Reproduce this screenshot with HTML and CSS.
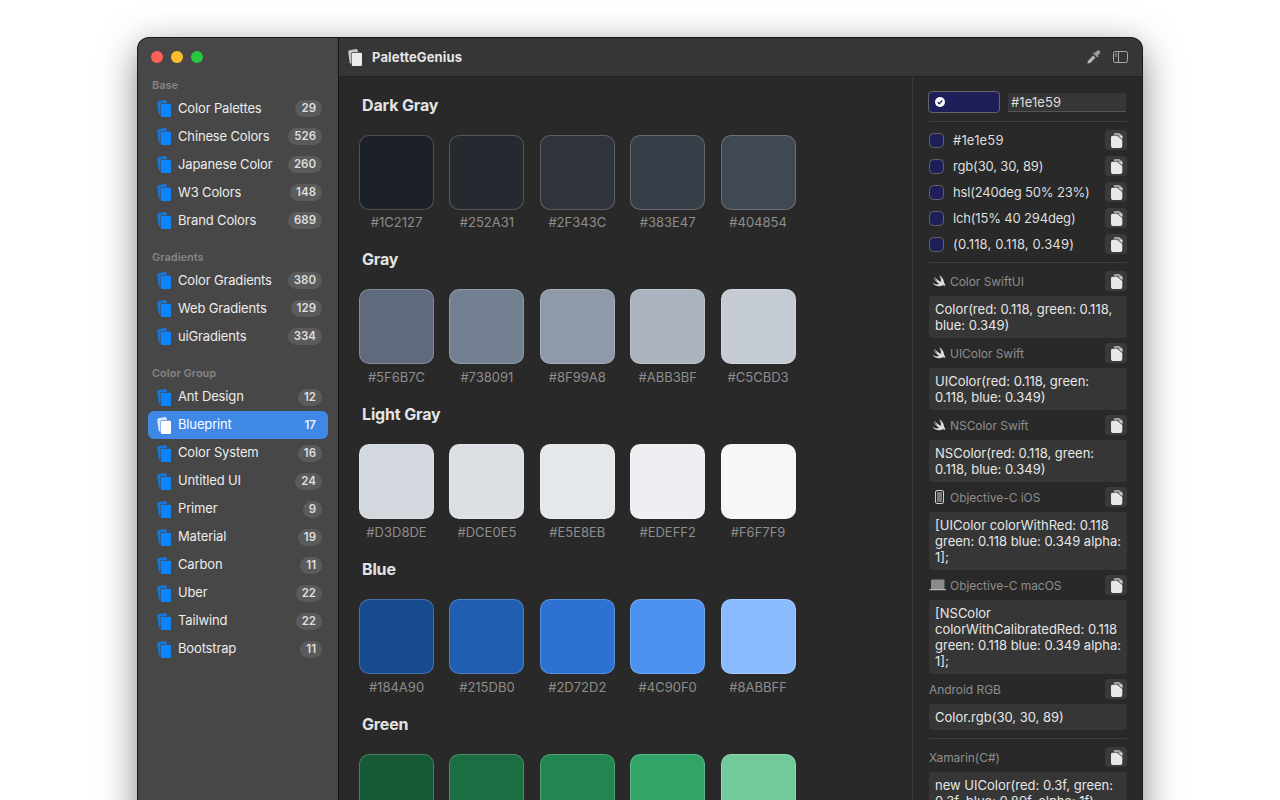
FILE: index.html
```html
<!DOCTYPE html>
<html lang="en">
<head>
<meta charset="utf-8">
<title>PaletteGenius</title>
<link rel="stylesheet" href="styles.css">
</head>
<body>
<svg class="defs" width="0" height="0">
  <symbol id="stack" viewBox="0 0 14 17">
    <path d="M.2 3.200Q0 1.600 1.500 1.300L7.900.1Q9.300 0 9.600 1.200L10 3H4.800Q3.300 3 3.300 4.500V14.600L1.800 14.200z" class="stack-back"/>
    <path d="M5 3.800h7.800a1.200 1.200 0 0 1 1.200 1.200v10.800a1.200 1.200 0 0 1-1.200 1.200H5a1.200 1.200 0 0 1-1.200-1.200V5A1.200 1.200 0 0 1 5 3.800z"/>
  </symbol>
  <symbol id="copy" viewBox="0 0 13 15">
    <path d="M4 0h5.300l3.200 2.600V6L8.200 2.300H4z" opacity=".6"/>
    <path d="M2.500 2.800H7L12.300 7v6a2 2 0 0 1-2 2H3a2 2 0 0 1-2-2V4.300a1.500 1.500 0 0 1 1.500-1.500z"/>
    <path d="M8.200 2.800l4.100 3.300V3.600l-1-.8z" opacity=".85"/>
  </symbol>
  <symbol id="swift" viewBox="0 0 16 14">
    <path d="M1 8.600C3.500 10.500 6 10.800 8 9.900 5.600 8 3.200 5.300 2 3.500 3.800 5.300 5.500 6.700 6.600 7.400 5.300 6 4 4.100 3.200 2.600 5 4.600 7.400 6.700 9.700 8.100 10.400 6 9.800 3.400 8 1c3 1.800 5.200 4.800 5 7.600 1 1.200 1.400 2.700 1.200 4-.6-1.100-1.800-1.600-2.700-1.100C9.200 12.800 4.500 13.200 1 8.600z"/>
  </symbol>
</svg>

<div class="window">
  <aside class="sidebar">
    <div class="lights"><i class="light red"></i><i class="light yellow"></i><i class="light green"></i></div>

    <div class="group-title first">Base</div>
    <div class="item"><svg class="item-icon"><use href="#stack"/></svg><span class="item-name">Color Palettes</span><span class="badge">29</span></div>
    <div class="item"><svg class="item-icon"><use href="#stack"/></svg><span class="item-name">Chinese Colors</span><span class="badge">526</span></div>
    <div class="item"><svg class="item-icon"><use href="#stack"/></svg><span class="item-name">Japanese Color</span><span class="badge">260</span></div>
    <div class="item"><svg class="item-icon"><use href="#stack"/></svg><span class="item-name">W3 Colors</span><span class="badge">148</span></div>
    <div class="item"><svg class="item-icon"><use href="#stack"/></svg><span class="item-name">Brand Colors</span><span class="badge">689</span></div>

    <div class="group-title">Gradients</div>
    <div class="item"><svg class="item-icon"><use href="#stack"/></svg><span class="item-name">Color Gradients</span><span class="badge">380</span></div>
    <div class="item"><svg class="item-icon"><use href="#stack"/></svg><span class="item-name">Web Gradients</span><span class="badge">129</span></div>
    <div class="item"><svg class="item-icon"><use href="#stack"/></svg><span class="item-name">uiGradients</span><span class="badge">334</span></div>

    <div class="group-title">Color Group</div>
    <div class="item"><svg class="item-icon"><use href="#stack"/></svg><span class="item-name">Ant Design</span><span class="badge">12</span></div>
    <div class="item selected"><svg class="item-icon"><use href="#stack"/></svg><span class="item-name">Blueprint</span><span class="badge">17</span></div>
    <div class="item"><svg class="item-icon"><use href="#stack"/></svg><span class="item-name">Color System</span><span class="badge">16</span></div>
    <div class="item"><svg class="item-icon"><use href="#stack"/></svg><span class="item-name">Untitled UI</span><span class="badge">24</span></div>
    <div class="item"><svg class="item-icon"><use href="#stack"/></svg><span class="item-name">Primer</span><span class="badge">9</span></div>
    <div class="item"><svg class="item-icon"><use href="#stack"/></svg><span class="item-name">Material</span><span class="badge">19</span></div>
    <div class="item"><svg class="item-icon"><use href="#stack"/></svg><span class="item-name">Carbon</span><span class="badge">11</span></div>
    <div class="item"><svg class="item-icon"><use href="#stack"/></svg><span class="item-name">Uber</span><span class="badge">22</span></div>
    <div class="item"><svg class="item-icon"><use href="#stack"/></svg><span class="item-name">Tailwind</span><span class="badge">22</span></div>
    <div class="item"><svg class="item-icon"><use href="#stack"/></svg><span class="item-name">Bootstrap</span><span class="badge">11</span></div>
  </aside>

  <div class="content">
    <header class="toolbar">
      <svg class="app-icon"><use href="#stack"/></svg>
      <span class="app-name">PaletteGenius</span>
      <svg class="tool-icon dropper" viewBox="0 0 14 14"><path d="M.4 13.600l.6-2.900 5.200-5.200 2.300 2.300-5.200 5.200z"/><path d="M5.800 3.200l1.100-1 .8.800L9.900.8a1.800 1.800 0 0 1 2.900.3 1.800 1.800 0 0 1 .1 2.300l-2.200 2.200.8.800-1 1.100z" class="dropper-tip"/></svg>
      <svg class="tool-icon panel-toggle" viewBox="0 0 15 12"><rect x=".5" y=".5" width="14" height="11" rx="1.800" fill="none" stroke="currentColor"/><path d="M5.500 .5v11M2 3h2M2 5h2" fill="none" stroke="currentColor"/></svg>
    </header>

    <div class="panes">
      <main class="palette">
        <section class="section">
          <h2 class="section-title">Dark Gray</h2>
          <div class="swatches">
            <div class="swatch"><div class="chip" style="background:#1C2127"></div><span class="hex">#1C2127</span></div>
            <div class="swatch"><div class="chip" style="background:#252A31"></div><span class="hex">#252A31</span></div>
            <div class="swatch"><div class="chip" style="background:#2F343C"></div><span class="hex">#2F343C</span></div>
            <div class="swatch"><div class="chip" style="background:#383E47"></div><span class="hex">#383E47</span></div>
            <div class="swatch"><div class="chip" style="background:#404854"></div><span class="hex">#404854</span></div>
          </div>
        </section>
        <section class="section">
          <h2 class="section-title">Gray</h2>
          <div class="swatches">
            <div class="swatch"><div class="chip" style="background:#5F6B7C"></div><span class="hex">#5F6B7C</span></div>
            <div class="swatch"><div class="chip" style="background:#738091"></div><span class="hex">#738091</span></div>
            <div class="swatch"><div class="chip" style="background:#8F99A8"></div><span class="hex">#8F99A8</span></div>
            <div class="swatch"><div class="chip" style="background:#ABB3BF"></div><span class="hex">#ABB3BF</span></div>
            <div class="swatch"><div class="chip" style="background:#C5CBD3"></div><span class="hex">#C5CBD3</span></div>
          </div>
        </section>
        <section class="section">
          <h2 class="section-title">Light Gray</h2>
          <div class="swatches">
            <div class="swatch"><div class="chip" style="background:#D3D8DE"></div><span class="hex">#D3D8DE</span></div>
            <div class="swatch"><div class="chip" style="background:#DCE0E5"></div><span class="hex">#DCE0E5</span></div>
            <div class="swatch"><div class="chip" style="background:#E5E8EB"></div><span class="hex">#E5E8EB</span></div>
            <div class="swatch"><div class="chip" style="background:#EDEFF2"></div><span class="hex">#EDEFF2</span></div>
            <div class="swatch"><div class="chip" style="background:#F6F7F9"></div><span class="hex">#F6F7F9</span></div>
          </div>
        </section>
        <section class="section">
          <h2 class="section-title">Blue</h2>
          <div class="swatches">
            <div class="swatch"><div class="chip" style="background:#184A90"></div><span class="hex">#184A90</span></div>
            <div class="swatch"><div class="chip" style="background:#215DB0"></div><span class="hex">#215DB0</span></div>
            <div class="swatch"><div class="chip" style="background:#2D72D2"></div><span class="hex">#2D72D2</span></div>
            <div class="swatch"><div class="chip" style="background:#4C90F0"></div><span class="hex">#4C90F0</span></div>
            <div class="swatch"><div class="chip" style="background:#8ABBFF"></div><span class="hex">#8ABBFF</span></div>
          </div>
        </section>
        <section class="section">
          <h2 class="section-title">Green</h2>
          <div class="swatches">
            <div class="swatch"><div class="chip" style="background:#165A36"></div></div>
            <div class="swatch"><div class="chip" style="background:#1C6E42"></div></div>
            <div class="swatch"><div class="chip" style="background:#238551"></div></div>
            <div class="swatch"><div class="chip" style="background:#32A467"></div></div>
            <div class="swatch"><div class="chip" style="background:#72CA9B"></div></div>
          </div>
        </section>
      </main>

      <aside class="inspector">
        <div class="picker">
          <div class="well"><svg class="well-check" viewBox="0 0 10 10"><circle cx="5" cy="5" r="5" fill="#fff"/><path d="M2.800 5.200l1.500 1.500 3-3.300" fill="none" stroke="#1e1e59" stroke-width="1.300"/></svg></div>
          <div class="hex-input">#1e1e59</div>
        </div>
        <hr class="rule rule-top">
        <div class="value-row"><i class="dot"></i><span class="value-text wide">#1e1e59</span><span class="copy"><svg class="copy-icon"><use href="#copy"/></svg></span></div>
        <div class="value-row"><i class="dot"></i><span class="value-text">rgb(30, 30, 89)</span><span class="copy"><svg class="copy-icon"><use href="#copy"/></svg></span></div>
        <div class="value-row"><i class="dot"></i><span class="value-text">hsl(240deg 50% 23%)</span><span class="copy"><svg class="copy-icon"><use href="#copy"/></svg></span></div>
        <div class="value-row"><i class="dot"></i><span class="value-text">lch(15% 40 294deg)</span><span class="copy"><svg class="copy-icon"><use href="#copy"/></svg></span></div>
        <div class="value-row"><i class="dot"></i><span class="value-text wide">(0.118, 0.118, 0.349)</span><span class="copy"><svg class="copy-icon"><use href="#copy"/></svg></span></div>
        <hr class="rule rule-mid">

        <div class="code-head"><svg class="lang-icon"><use href="#swift"/></svg><span class="code-label">Color SwiftUI</span><span class="copy"><svg class="copy-icon"><use href="#copy"/></svg></span></div>
        <div class="code">Color(red: 0.118, green: 0.118, blue: 0.349)</div>
        <div class="code-head"><svg class="lang-icon"><use href="#swift"/></svg><span class="code-label">UIColor Swift</span><span class="copy"><svg class="copy-icon"><use href="#copy"/></svg></span></div>
        <div class="code">UIColor(red: 0.118, green: 0.118, blue: 0.349)</div>
        <div class="code-head"><svg class="lang-icon"><use href="#swift"/></svg><span class="code-label">NSColor Swift</span><span class="copy"><svg class="copy-icon"><use href="#copy"/></svg></span></div>
        <div class="code">NSColor(red: 0.118, green: 0.118, blue: 0.349)</div>
        <div class="code-head"><svg class="lang-icon" viewBox="0 0 16 14"><rect x="4.500" y=".5" width="8" height="13" rx="1.500" fill="none" stroke="currentColor"/><rect x="6" y="2" width="5" height="10" opacity=".45"/></svg><span class="code-label">Objective-C iOS</span><span class="copy"><svg class="copy-icon"><use href="#copy"/></svg></span></div>
        <div class="code">[UIColor colorWithRed: 0.118 green: 0.118 blue: 0.349 alpha: 1];</div>
        <div class="code-head"><svg class="lang-icon" viewBox="0 0 16 14"><rect x="0" y="1.500" width="13.500" height="9.500" rx=".8" opacity=".55"/><path d="M-1.500 11.200h16.500v1H-1.500z"/></svg><span class="code-label">Objective-C macOS</span><span class="copy"><svg class="copy-icon"><use href="#copy"/></svg></span></div>
        <div class="code">[NSColor colorWithCalibratedRed: 0.118 green: 0.118 blue: 0.349 alpha: 1];</div>
        <div class="code-head"><span class="code-label">Android RGB</span><span class="copy"><svg class="copy-icon"><use href="#copy"/></svg></span></div>
        <div class="code">Color.rgb(30, 30, 89)</div>
        <hr class="rule rule-code">
        <div class="code-head"><span class="code-label">Xamarin(C#)</span><span class="copy"><svg class="copy-icon"><use href="#copy"/></svg></span></div>
        <div class="code">new UIColor(red: 0.3f, green: 0.3f, blue: 0.89f, alpha: 1f)</div>
      </aside>
    </div>
  </div>
</div>
</body>
</html>
```
FILE: styles.css
```css
* { box-sizing: border-box; }
html, body { margin: 0; height: 800px; overflow: hidden; background: #fff; }
body { padding: 38px 138px 0; font-family: Inter, "Liberation Sans", sans-serif; font-size: 13px; color: #e6e6e6; }
.defs { position: absolute; }

.window {
  display: flex;
  width: 1004px;
  height: 860px;
  border-radius: 11px 11px 0 0;
  overflow: hidden;
  background: #292929;
  box-shadow: 0 0 0 1px #1a1a1a, 0 10px 36px rgba(0,0,0,.5);
}

.sidebar { width: 200px; flex: none; padding: 0 10px; background: #474747; }
.lights { display: flex; gap: 8px; height: 38px; align-items: center; padding-left: 3px; }
.light { width: 12px; height: 12px; border-radius: 50%; }
.red { background: #ff5f57; }
.yellow { background: #febc2e; }
.green { background: #28c840; }

.group-title { padding: 0 4px; margin: 16.33px 0 0; height: 16px; line-height: 13px; font-size: 11px; font-weight: 600; color: #858585; }
.group-title.first { margin-top: 2.5px; }

.item { display: flex; align-items: center; height: 28px; padding: 0 6px 0 9px; border-radius: 6px; color: #ececec; font-size: 13px; letter-spacing: -.15px; }
.item-icon { width: 14px; height: 17px; flex: none; margin-right: 7px; fill: #0a84ff; }
.stack-back { opacity: .8; }
.item-name { flex: 1; min-width: 0; line-height: 16px; padding-bottom: 2px; }
.badge { min-width: 18px; height: 17px; padding: 0 6px; border-radius: 9px; background: #5b5b5b; line-height: 17px; text-align: center; font-size: 11.5px; font-weight: 600; letter-spacing: 0; color: #dedede; }
.item.selected { background: #4088e6; color: #fff; }
.item.selected .item-icon { fill: #fff; }
.item.selected .badge { background: none; color: #e8f0fc; }

.content { flex: 1; min-width: 0; display: flex; flex-direction: column; border-left: 1px solid #151515; }
.toolbar { display: flex; align-items: center; height: 39px; flex: none; padding: 0 14px 0 9px; background: #363636; border-bottom: 1px solid #222; }
.app-icon { width: 14px; height: 17px; fill: #ececec; margin-right: 10px; }
.app-name { flex: 1; font-size: 13px; font-weight: 700; letter-spacing: .15px; color: #e4e4e4; }
.tool-icon { fill: #b8b8b8; color: #a8a8a8; }
.dropper { width: 14px; height: 14px; margin-right: 12px; }
.dropper-tip { fill: #9a9a9a; }
.panel-toggle { width: 15px; height: 12px; }

.panes { flex: 1; display: flex; min-height: 0; }
.palette { flex: 1; min-width: 0; padding: 18.7px 0 0 20px; }
.section { height: 154.75px; }
.section-title { margin: 0 0 20px 3px; height: 19px; line-height: 19px; font-size: 16px; font-weight: 700; letter-spacing: -.15px; color: #e3e3e3; }
.swatches { display: flex; gap: 15.4px; }
.swatch { width: 75px; display: flex; flex-direction: column; align-items: center; }
.chip { width: 75px; height: 75px; border-radius: 10px; border: 1px solid rgba(255,255,255,.22); }
.hex { margin-top: 4.7px; line-height: 16px; font-size: 13px; letter-spacing: 0; color: #8d8d8d; white-space: nowrap; }

.inspector { width: 230px; flex: none; padding: 14px 15px 0 16px; border-left: 1px solid #3b3b3b; }
.picker { display: flex; align-items: center; gap: 8px; height: 22px; margin: 0 1px 0 -1px; }
.well { width: 72px; height: 22px; flex: none; display: flex; align-items: center; padding-left: 6px; background: #1e1e59; border: 1px solid #666; border-radius: 4px; }
.well-check { width: 10px; height: 10px; }
.hex-input { flex: 1; height: 19px; padding-left: 3px; background: #363636; border-bottom: 1px solid #555; line-height: 18px; font-size: 13px; letter-spacing: .1px; color: #dcdcdc; }
.rule { height: 1px; margin: 0; border: 0; background: #3e3e3e; }
.rule-top { margin: 8px 0 5px; }
.rule-mid { margin: 5px 0 8px; }
.rule-code { margin: 8px 0 8px; }

.value-row { display: flex; align-items: center; height: 26px; }
.dot { width: 15px; height: 15px; flex: none; margin-right: 9px; border-radius: 4.5px; background: #1e1e59; border: 1px solid #626262; }
.value-text { flex: 1; font-size: 13px; letter-spacing: -.17px; color: #dedede; white-space: nowrap; }
.value-text.wide { letter-spacing: .16px; }
.copy { width: 22px; height: 20px; flex: none; display: flex; align-items: center; justify-content: center; border-radius: 4px; background: #3a3a3a; }
.copy-icon { width: 13px; height: 15px; fill: #e8e8e8; }

.code-head { display: flex; align-items: center; height: 20px; margin-bottom: 5px; }
.code + .code-head { margin-top: 5px; }
.lang-icon { width: 16px; height: 14px; flex: none; margin: 0 3px 0 2px; fill: #dcdcdc; color: #cfcfcf; overflow: visible; }
.code-label { flex: 1; font-size: 12px; letter-spacing: -.05px; color: #8e8e8e; white-space: nowrap; }
.code { padding: 5px 6px; border-radius: 3px; background: #363636; line-height: 16px; font-size: 13px; letter-spacing: 0; color: #e6e6e6; }
```
